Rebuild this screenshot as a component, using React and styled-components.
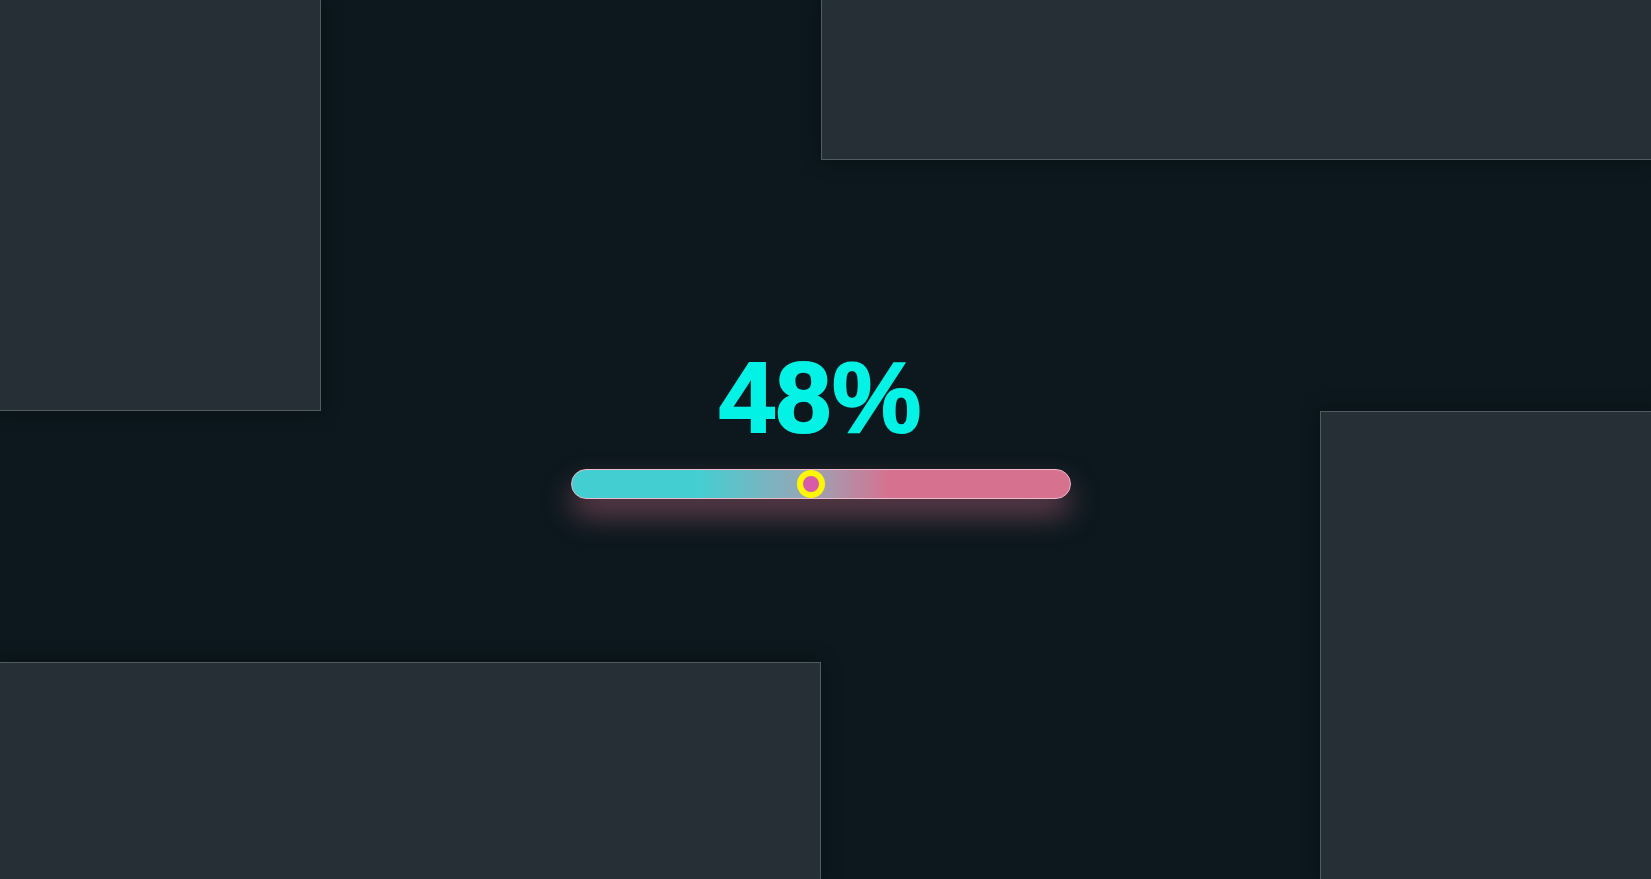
import React from 'react';
import styled, { createGlobalStyle } from 'styled-components';

const GlobalStyle = createGlobalStyle`
  html, body {
    margin: 0;
    padding: 0;
    background: #0c181d;
    overflow: hidden;
  }
  * {
    box-sizing: border-box;
  }
`;

const Stage = styled.div`
  width: 100vw;
  height: 100vh;
  display: grid;
  grid-template-columns: 321px 500px 499px 1fr;
  grid-template-rows: 160px 251px 251px 1fr;
  background: #0c181d;
  font-family: "Liberation Sans", Arial, sans-serif;
`;

const Panel = styled.div`
  grid-column: ${(p) => p.col};
  grid-row: ${(p) => p.row};
  background: #252f35;
  border: 1px solid #525c60;
  box-shadow: 0 0 18px rgba(0, 0, 0, 0.35);
  margin: ${(p) => p.m || '0'};
`;

const Center = styled.div`
  grid-column: 2 / 4;
  grid-row: 2 / 4;
  display: flex;
  flex-direction: column;
  align-items: center;
  justify-content: center;
  padding-top: 24px;
`;

const Percent = styled.div`
  color: #02f3e5;
  font-size: 100px;
  font-weight: 700;
  line-height: 1;
  letter-spacing: 1px;
  -webkit-text-stroke: 2px #02f3e5;
  margin-bottom: 22px;
`;

const Track = styled.div`
  position: relative;
  width: 500px;
  height: 30px;
  border-radius: 15px;
  border: 1px solid #efb9c9;
  background: linear-gradient(
    90deg,
    #43cfd1 0%,
    #43cfd1 25%,
    #9aa4b4 48%,
    #d6718f 64%,
    #d6718f 100%
  );
  box-shadow: 0 16px 30px rgba(214, 113, 143, 0.45);
`;

const Thumb = styled.div`
  position: absolute;
  top: 50%;
  width: 28px;
  height: 28px;
  border-radius: 50%;
  border: 6px solid #fff700;
  background: #d75ba8;
  transform: translate(-50%, -50%);
`;

const App = () => {
  const value = 48;
  return (
    <Stage>
      <GlobalStyle />
      <Panel col="1" row="1 / 3" m="-1px 0 0 -1px" />
      <Panel col="3 / 5" row="1" m="-1px -1px 0 0" />
      <Panel col="4" row="3 / 5" m="0 -1px -1px 0" />
      <Panel col="1 / 3" row="4" m="0 0 -1px -1px" />
      <Center>
        <Percent>{value}%</Percent>
        <Track>
          <Thumb style={{ left: `${value}%` }} />
        </Track>
      </Center>
    </Stage>
  );
};

export default App;
